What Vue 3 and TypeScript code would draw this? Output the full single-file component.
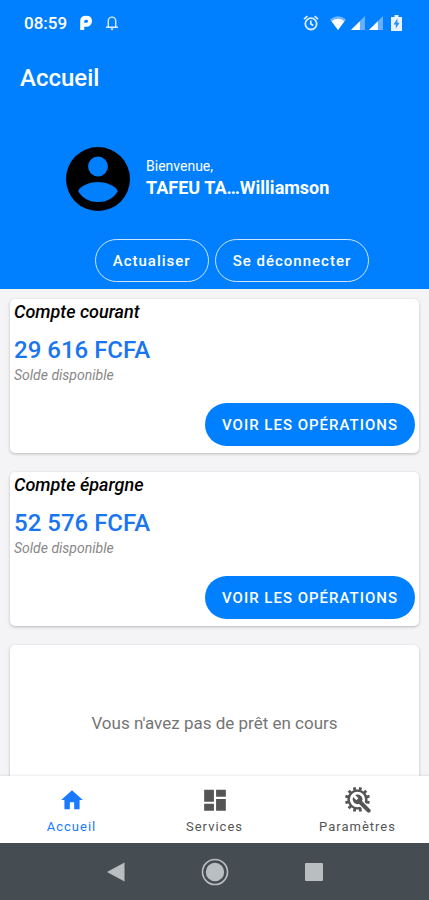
<script setup lang="ts">
import { ref } from 'vue'

interface Account {
  id: string
  title: string
  balance: string
}

type Tab = 'home' | 'services' | 'settings'

const accounts: Account[] = [
  { id: 'courant', title: 'Compte courant', balance: '29 616 FCFA' },
  { id: 'epargne', title: 'Compte épargne', balance: '52 576 FCFA' },
]

const tabs: { id: Tab; label: string }[] = [
  { id: 'home', label: 'Accueil' },
  { id: 'services', label: 'Services' },
  { id: 'settings', label: 'Paramètres' },
]

const active = ref<Tab>('home')
// The wrench handle crosses the gear at the lower right, so that tooth is left out.
const toothAngles = Array.from({ length: 12 }, (_, i) => i * 30 + 15).filter((a) => a !== 135)
</script>

<template>
  <div class="app">
    <header class="top">
      <div class="status">
        <div class="status-group">
          <span class="time">08:59</span>
          <svg class="p-icon" viewBox="0 0 14 16" aria-hidden="true">
            <path d="M3.2 15V6.200C3.200 3.800 5 2.800 7.200 2.800S11 4 11 6.200 9.400 9.800 7.400 9.800H3.200" fill="none" stroke="#fff" stroke-width="4" />
          </svg>
          <svg class="bell" viewBox="0 0 14 16" aria-hidden="true">
            <path d="M3.300 11.500V6a3.700 3.900 0 0 1 7.400 0v5.500M1 12.200h12" fill="none" stroke="#dcebff" stroke-width="1.400" />
            <path d="M5.400 13.400h3.200L7 15.400z" fill="#fff" />
          </svg>
        </div>
        <div class="status-group right">
          <svg class="alarm" viewBox="0 0 16 16" aria-hidden="true">
            <g fill="none" stroke="#dcebff" stroke-width="1.800">
              <circle cx="8" cy="8.800" r="5.700" />
              <path d="M7.800 5.400v3.600l2.600 1.600M1 4.200l3.400-3M15 4.200l-3.400-3" />
            </g>
          </svg>
          <svg class="wifi" viewBox="0 0 18 16" aria-hidden="true">
            <path d="M1 4.500Q9-2 17 4.500L9 15z" fill="#6fb5ff" />
            <path d="M2.600 6.200Q9 1.400 15.400 6.200L9 15z" fill="#fff" />
          </svg>
          <svg v-for="n in 2" :key="n" class="signal" viewBox="0 0 15 15" aria-hidden="true">
            <path d="M15 0v15H0z" fill="#66b0ff" />
            <path d="M9.500 5.500V15H0z" fill="#fff" />
          </svg>
          <svg class="battery" viewBox="0 0 11 16" aria-hidden="true">
            <path d="M3.500 0h4v2H11v14H0V2h3.500z" fill="#e8f1ff" />
            <path d="M6.400 3.600 2.600 9.400h2.200v4.200l3.800-5.800H6.400z" fill="#2f8cf5" />
          </svg>
        </div>
      </div>
      <h1>Accueil</h1>
      <div class="profile">
        <svg class="avatar" viewBox="2 2 20 20" aria-hidden="true">
          <path d="M12 2a10 10 0 1 0 0 20 10 10 0 0 0 0-20zm0 3a3 3 0 1 1 0 6.200A3 3 0 0 1 12 5zm0 14.200a7.200 7.200 0 0 1-6.200-3.300C6.200 13.900 10 12.900 12 12.900s5.800 1 6.200 3a7.200 7.200 0 0 1-6.200 3.300z" />
        </svg>
        <div class="identity">
          <p class="welcome">Bienvenue,</p>
          <p class="name">TAFEU TA…Williamson</p>
        </div>
      </div>
      <div class="actions">
        <button type="button" class="btn outline">Actualiser</button>
        <button type="button" class="btn outline">Se déconnecter</button>
      </div>
    </header>

    <main>
      <section v-for="account in accounts" :key="account.id" class="card">
        <h2>{{ account.title }}</h2>
        <p class="balance">{{ account.balance }}</p>
        <p class="caption">Solde disponible</p>
        <button type="button" class="btn filled">VOIR LES OPÉRATIONS</button>
      </section>
      <section class="card empty">
        <p>Vous n'avez pas de prêt en cours</p>
      </section>
    </main>

    <nav class="tabs">
      <button
        v-for="tab in tabs"
        :key="tab.id"
        type="button"
        :class="['tab', { active: active === tab.id }]"
        @click="active = tab.id"
      >
        <svg viewBox="0 0 24 24" aria-hidden="true">
          <path v-if="tab.id === 'home'" d="M10 20.500v-6.500h4v6.500h5v-8.500h3L12 3 2 12h3v8.500z" />
          <path v-else-if="tab.id === 'services'" d="M2 2.500h9v11H2zM2 15.500h9v6.500H2zM13 2.500h9v6.500h-9zM13 11h9v11h-9z" />
          <g v-else>
            <circle cx="11.500" cy="11.500" r="8.200" fill="none" stroke="currentColor" stroke-width="2.200" />
            <rect
              v-for="angle in toothAngles"
              :key="angle"
              x="10.200"
              y="0"
              width="2.600"
              height="3"
              :transform="`rotate(${angle} 11.5 11.5)`"
            />
            <path d="M15 15l8 8" stroke="#fff" stroke-width="6" />
            <path d="M12.500 12.500l9.300 9.300" stroke="currentColor" stroke-width="3.800" stroke-linecap="round" />
            <circle cx="11.600" cy="11.400" r="4.500" />
            <path d="M7 6.800l4.400 4.400" stroke="#fff" stroke-width="2.600" />
          </g>
        </svg>
        <span>{{ tab.label }}</span>
      </button>
    </nav>

    <div class="system">
      <button type="button" aria-label="Retour">
        <svg viewBox="0 0 28 28"><path d="M5 14 22.500 4.500v19z" fill="#b9bfc1" /></svg>
      </button>
      <button type="button" aria-label="Écran d'accueil">
        <svg viewBox="0 0 28 28">
          <circle cx="14" cy="14" r="12.500" fill="none" stroke="#b9bfc1" stroke-width="1.600" />
          <circle cx="14" cy="14" r="9.200" fill="#b9bfc1" />
        </svg>
      </button>
      <button type="button" aria-label="Applications récentes">
        <svg viewBox="0 0 28 28"><rect x="5" y="5" width="18" height="18" rx="1" fill="#b9bfc1" /></svg>
      </button>
    </div>
  </div>
</template>

<style>
body {
  margin: 0;
}
</style>

<style scoped>
.app {
  display: flex;
  flex-direction: column;
  height: 100vh;
  background: #f4f4f7;
  font-family: Roboto, sans-serif;
  color: #000;
}
h1,
h2,
p {
  margin: 0;
}
button {
  margin: 0;
  border: 0;
  background: none;
  font-family: inherit;
  cursor: pointer;
}
svg {
  display: block;
}
.top {
  flex: none;
  padding-bottom: 7px;
  background: #0080ff;
  color: #fff;
}
.status {
  display: flex;
  justify-content: space-between;
  align-items: center;
  height: 45px;
  padding: 0 27px 0 24px;
}
.status-group {
  display: flex;
  align-items: center;
  gap: 12px;
}
.right {
  gap: 4px;
}
.time {
  font-size: 17px;
  font-weight: 500;
}
.p-icon,
.bell {
  width: 14px;
  height: 16px;
}
.alarm {
  width: 16px;
  height: 16px;
  margin-right: 6px;
}
.wifi {
  width: 18px;
  height: 16px;
}
.signal {
  width: 14px;
  height: 14px;
}
.battery {
  width: 11px;
  height: 16px;
  margin-left: 4px;
}
h1 {
  padding: 19px 20px;
  font-size: 24px;
  line-height: 28px;
  font-weight: 500;
}
.profile {
  display: flex;
  align-items: center;
  gap: 16px;
  padding: 36px 66px 28px;
}
.avatar {
  width: 64px;
  height: 64px;
  fill: #000;
}
.identity {
  padding-bottom: 2px;
}
.welcome {
  font-size: 14px;
  line-height: 20px;
}
.name {
  font-size: 18px;
  line-height: 24px;
  font-weight: 700;
}
.actions {
  display: flex;
  justify-content: center;
  gap: 6px;
  padding-left: 35px;
}
.btn {
  box-sizing: border-box;
  height: 43px;
  padding: 0 17px;
  border-radius: 22px;
  color: #fff;
  font-size: 15px;
  font-weight: 500;
  letter-spacing: 1px;
}
.outline {
  border: 1px solid #cfe5ff;
}
.filled {
  align-self: flex-end;
  margin-top: 18px;
  background: #0080ff;
}
main {
  flex: 1;
  min-height: 0;
  display: flex;
  flex-direction: column;
  gap: 19px;
  padding: 10px 10px 0;
  overflow: hidden;
}
.card {
  flex: none;
  display: flex;
  flex-direction: column;
  padding: 0 4px 7px;
  border-radius: 5px;
  background: #fff;
  box-shadow: 0 1px 3px rgba(0, 0, 0, 0.25);
}
h2 {
  font-size: 18px;
  line-height: 26px;
  font-weight: 500;
  font-style: italic;
}
.balance {
  padding-top: 10px;
  color: #1a75f0;
  font-size: 24px;
  line-height: 30px;
  font-weight: 500;
}
.caption {
  color: #888;
  font-size: 14px;
  line-height: 20px;
  font-style: italic;
}
.empty {
  align-items: center;
  justify-content: center;
  height: 156px;
  padding: 0;
  color: #757575;
  font-size: 17px;
}
.tabs {
  flex: none;
  display: flex;
  height: 67px;
  background: #fff;
  box-shadow: 0 -1px 2px rgba(0, 0, 0, 0.08);
  z-index: 1;
}
.tab {
  flex: 1;
  display: flex;
  flex-direction: column;
  align-items: center;
  gap: 4px;
  padding: 11px 0 0;
  color: #555;
  font-size: 13px;
  line-height: 20px;
  letter-spacing: 1px;
}
.tab svg {
  width: 26px;
  height: 26px;
  fill: currentColor;
}
.tab.active {
  color: #1a7aff;
}
.system {
  flex: none;
  display: flex;
  justify-content: center;
  align-items: center;
  gap: 71px;
  height: 57px;
  background: #454d52;
}
.system button {
  padding: 0;
}
.system svg {
  width: 28px;
  height: 28px;
}
</style>
